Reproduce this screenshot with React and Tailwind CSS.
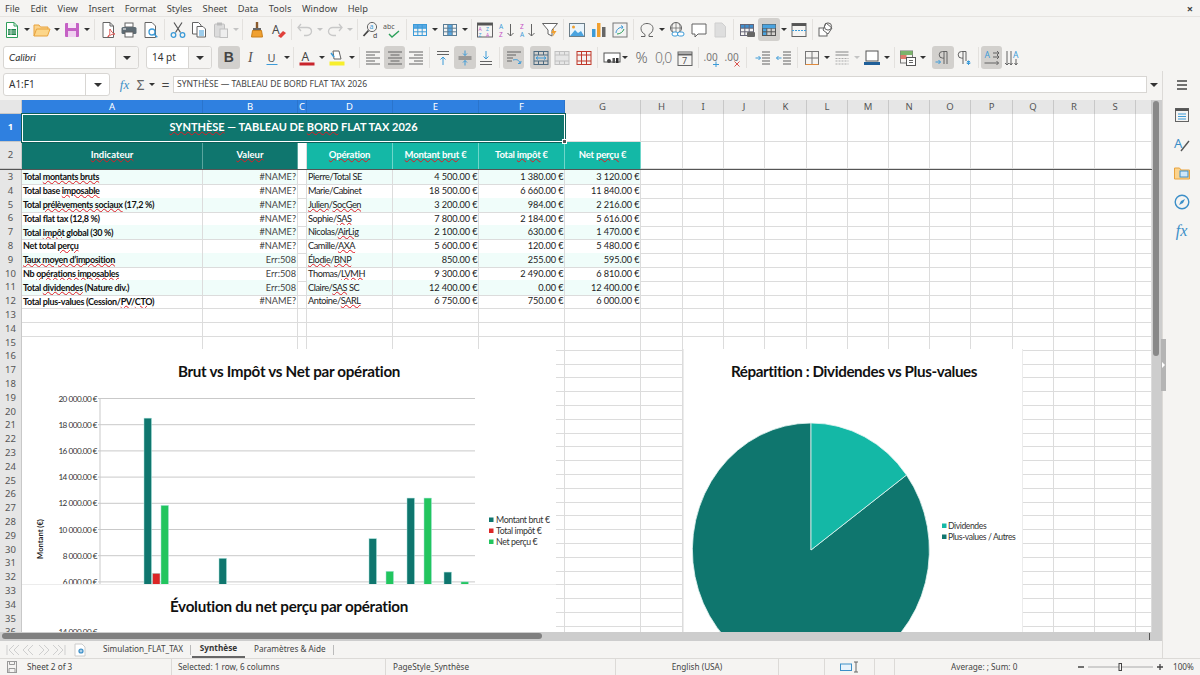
import React from 'react';

const G = '#636363';
const B = '#3c9bd8';
const COLS = 'grid grid-cols-[22px_181px_95px_9px_86px_86px_86px_76px_42px_41px_41px_42px_41px_41px_41px_41px_42px_41px_41px_41px_16px]';
const letters = ['A', 'B', 'C', 'D', 'E', 'F', 'G', 'H', 'I', 'J', 'K', 'L', 'M', 'N', 'O', 'P', 'Q', 'R', 'S', ''];

const rows = [
  ['Total *montants bruts*', '#NAME?', 'Pierre/Total SE', '4 500.00 €', '1 380.00 €', '3 120.00 €'],
  ['Total base *imposable*', '#NAME?', 'Marie/Cabinet', '18 500.00 €', '6 660.00 €', '11 840.00 €'],
  ['Total *prélèvements sociaux* (17,2 %)', '#NAME?', '*Julien*/*SocGen*', '3 200.00 €', '984.00 €', '2 216.00 €'],
  ['Total flat tax (12,8 %)', '#NAME?', 'Sophie/*SAS*', '7 800.00 €', '2 184.00 €', '5 616.00 €'],
  ['Total *impôt* global (30 %)', '#NAME?', 'Nicolas/*AirLig*', '2 100.00 €', '630.00 €', '1 470.00 €'],
  ['Net total *perçu*', '#NAME?', 'Camille/*AXA*', '5 600.00 €', '120.00 €', '5 480.00 €'],
  ['*Taux moyen d’imposition*', 'Err:508', '*Élodie*/*BNP*', '850.00 €', '255.00 €', '595.00 €'],
  ['Nb *opérations imposables*', 'Err:508', 'Thomas/*LVMH*', '9 300.00 €', '2 490.00 €', '6 810.00 €'],
  ['Total *dividendes* (Nature div.)', 'Err:508', 'Claire/*SAS* SC', '12 400.00 €', '0.00 €', '12 400.00 €'],
  ['Total plus-values (Cession/*PV*/*CTO*)', '#NAME?', 'Antoine/*SARL*', '6 750.00 €', '750.00 €', '6 000.00 €'],
];

// text between stars gets the spellcheck squiggle
const Spell = ({ text }) =>
  text.split('*').map((part, i) =>
    i % 2 ? (
      <span key={i} className="underline decoration-wavy decoration-[#e01b24] decoration-1 underline-offset-[0px]">
        {part}
      </span>
    ) : (
      <span key={i}>{part}</span>
    )
  );

const Svg = ({ children, s = 18 }) => (
  <svg width={s} height={s} viewBox="0 0 18 18" fill="none" stroke={G} strokeWidth="1">
    {children}
  </svg>
);

const Btn = ({ children, on }) => (
  <div className={`w-[21.5px] h-[23px] shrink-0 flex items-center justify-center rounded-[3px] ${on ? 'bg-[#d2d0cd]' : ''}`}>
    {children}
  </div>
);

const Dd = ({ off }) => (
  <div className="w-[8.5px] shrink-0 flex justify-center">
    <span className={`border-x-[3px] border-t-[3px] border-x-transparent ${off ? 'border-t-[#c4c4c4]' : 'border-t-[#333]'}`} />
  </div>
);

const Sep = () => (
  <div className="w-[5.7px] shrink-0 flex justify-center">
    <span className="w-px h-[21px] bg-[#e3e1de]" />
  </div>
);

const Lines = ({ d }) => <path d={d} stroke={G} />;

const Grid = ({ color = G, fill }) => (
  <>
    {fill}
    <rect x="2.5" y="3.5" width="13" height="11" stroke={color} />
    <path d="M2.5 7.2h13M2.5 10.8h13M6.8 3.5v11M11.2 3.5v11" stroke={color} />
  </>
);

const Glyph = ({ x, y, size = 7, color = G, children }) => (
  <text x={x} y={y} fontSize={size} fill={color} stroke="none" fontFamily="'Noto Sans',sans-serif">
    {children}
  </text>
);

const Toolbar1 = () => (
  <div className="h-[27px] flex items-center pl-[1.25px] pb-[2px] shrink-0">
    <Btn><Svg><path d="M3.5 1.5h7.5l3.5 3.5v11.5h-11z" fill="#fff" stroke="#2f9e5b" /><path d="M11 1.5V5h3.5" stroke="#2f9e5b" /><rect x="5" y="8" width="8" height="6" fill="#1e8449" stroke="none" /><path d="M5 10h8M5 12h8M8 8v6" stroke="#fff" strokeWidth=".6" /></Svg></Btn>
    <Dd />
    <Btn><Svg><path d="M1 15V4h5l1.5 2H15v2" fill="#fbd38d" stroke="#e8a33d" /><path d="M1 15l2.5-7H17l-2.5 7z" fill="#fcd68a" stroke="#e8a33d" /></Svg></Btn>
    <Dd />
    <Btn><Svg><rect x="2" y="2" width="14" height="14" rx="1" fill="#c561c5" stroke="none" /><rect x="5" y="2" width="8" height="5" fill="#f7e6f7" stroke="none" /><rect x="5" y="10" width="8" height="6" fill="#f0d0f0" stroke="none" /></Svg></Btn>
    <Dd />
    <Sep />
    <Btn><Svg><path d="M4 1.5h7l3.5 3.5v11.5H4z" fill="#fff" /><path d="M11 1.5V5h3.5" /><path d="M9 15c3-1 1-6 2-7 1 2 3 5 5 5-3 0-5 1-7 3z" stroke="#d9534f" fill="#fff" /></Svg></Btn>
    <Btn><Svg><rect x="5" y="2" width="8" height="4" fill="#fff" /><rect x="1.5" y="6" width="15" height="7" rx="1.5" fill="#5e6b73" stroke="none" /><rect x="5" y="11" width="8" height="5" fill="#fff" /><path d="M3 8h3" stroke="#fff" /></Svg></Btn>
    <Btn><Svg><path d="M3 1.5h7l3.5 3.5v11.5H3z" fill="#fff" /><circle cx="10" cy="11" r="3" stroke={B} strokeWidth="1.3" fill="#fff" /><path d="M12.3 13.3l3 3" stroke={B} strokeWidth="1.5" /></Svg></Btn>
    <Sep />
    <Btn><Svg><path d="M5 1.5l6.5 10M13 1.5L6.5 11.5" stroke="#555" strokeWidth="1.2" /><circle cx="4.5" cy="14" r="2.3" stroke={B} strokeWidth="1.3" /><circle cx="13.5" cy="14" r="2.3" stroke={B} strokeWidth="1.3" /></Svg></Btn>
    <Btn><Svg><path d="M2.5 1.5h6l2.5 2.5v9H2.5z" fill="#fff" /><path d="M7 5.5h6l2.5 2.5v8H7z" fill="#fff" /><path d="M9 10h5M9 12h5M9 14h5" stroke={B} /></Svg></Btn>
    <Btn><Svg><rect x="2.5" y="3" width="10" height="13" rx="1" fill="#dcdcdc" stroke="#c0c0c0" /><rect x="5" y="1.5" width="5" height="3" fill="#bbb" stroke="none" /><rect x="8" y="8" width="7.5" height="8.5" fill="#eee" stroke="#c0c0c0" /></Svg></Btn>
    <Dd off />
    <Sep />
    <Btn><Svg><rect x="7.8" y="1" width="2.4" height="6" fill="#8a5a2b" stroke="none" /><rect x="5" y="7" width="8" height="2.5" fill="#666" stroke="none" /><path d="M4.5 9.5h9l1 6.5h-11z" fill="#f0a030" stroke="#c97f1a" /></Svg></Btn>
    <Btn><Svg><Glyph x="3" y="12.5" size="12" color="#4a4a4a">A</Glyph><path d="M9 15l5-5 3 2-5 5z" fill="#e0403a" stroke="none" /></Svg></Btn>
    <Sep />
    <Btn><Svg><path d="M5 3L2 6.5 5 10M2.5 6.5H11c3 0 4.5 2 4.5 4s-2 4-4.5 4H8" stroke="#c8c8c8" strokeWidth="1.3" /></Svg></Btn>
    <Dd off />
    <Btn><Svg><path d="M13 3l3 3.5L13 10M15.5 6.5H7c-3 0-4.5 2-4.5 4s2 4 4.5 4h3" stroke="#c8c8c8" strokeWidth="1.3" /></Svg></Btn>
    <Dd off />
    <Sep />
    <Btn><Svg><circle cx="10" cy="6" r="4.6" stroke="#666" /><Glyph x="7.6" y="8" size="7" color={B}>a</Glyph><path d="M6.5 9.5L1.5 15" stroke="#444" strokeWidth="1.8" /><Glyph x="11" y="16.5" size="7" color="#444">d</Glyph></Svg></Btn>
    <Btn><Svg><Glyph x="0" y="8" size="7" color="#555">abc</Glyph><path d="M6 13l3 3 7-6" stroke="#2ca05a" strokeWidth="1.4" /></Svg></Btn>
    <Sep />
    <Btn><Svg><Grid color={B} fill={<rect x="2.5" y="3.5" width="13" height="3.7" fill="#59a9e4" stroke="none" />} /></Svg></Btn>
    <Dd />
    <Btn><Svg><Grid color="#5a7d96" fill={<rect x="6.8" y="3.5" width="4.4" height="11" fill="#59a9e4" stroke="none" />} /></Svg></Btn>
    <Dd />
    <Sep />
    <Btn><Svg><rect x="1.5" y="2" width="15" height="14" /><rect x="1.5" y="2" width="15" height="2.5" fill="#555" stroke="none" /><Glyph x="2.5" y="10" size="5" color="#c44fc4">A</Glyph><Glyph x="10" y="10" size="5" color={B}>Z</Glyph><Glyph x="2.5" y="15.5" size="5" color={B}>Z</Glyph><Glyph x="10" y="15.5" size="5" color="#c44fc4">A</Glyph></Svg></Btn>
    <Btn><Svg><Glyph x="1" y="7.5" size="6.5" color={B}>A</Glyph><Glyph x="1" y="16" size="6.5" color="#c44fc4">Z</Glyph><path d="M12.5 3v12M9.5 12l3 3 3-3" /></Svg></Btn>
    <Btn><Svg><Glyph x="1" y="7.5" size="6.5" color="#c44fc4">Z</Glyph><Glyph x="1" y="16" size="6.5" color={B}>A</Glyph><path d="M12.5 3v12M9.5 12l3 3 3-3" /></Svg></Btn>
    <Btn><Svg><path d="M1.5 2.5h15l-5.5 6.5v6l-4-2V9z" fill="#fff" /><path d="M13 7l-3 5h2.5l-1 4 4-6h-2.5z" fill="#f0a030" stroke="none" /></Svg></Btn>
    <Sep />
    <Btn><Svg><rect x="1.5" y="2.5" width="15" height="13" stroke="#6b7d88" fill="#eaf4fb" /><circle cx="5.5" cy="6" r="1.5" fill="#f0a030" stroke="none" /><path d="M2 15l5-6 3 3 3-2 3 5z" fill="#4aa3df" stroke="none" /></Svg></Btn>
    <Btn><Svg><rect x="2" y="8" width="3.5" height="8" fill={B} stroke="none" /><rect x="7" y="2" width="3.5" height="14" fill="#f0a030" stroke="none" /><rect x="12" y="6" width="3.5" height="10" fill="#666" stroke="none" /></Svg></Btn>
    <Btn><Svg><rect x="2" y="2" width="14" height="14" fill="#f2f2f2" stroke="#777" /><path d="M5 12c0-3 3-6 7-6M12 6l-2-1.5M12 6l-1.5 2" stroke={B} /><path d="M6 13c3 0 6-2 7-5" stroke="#2ca05a" /></Svg></Btn>
    <Sep />
    <Btn><Svg><path d="M3 15.5h4v-2C4.5 12 3 10 3 7.5 3 4.5 5.5 2.5 9 2.5s6 2 6 5c0 2.500-1.500 4.500-4 6v2h4" /></Svg></Btn>
    <Dd />
    <Btn><Svg><circle cx="8" cy="7" r="5.5" /><path d="M2.500 7h11M8 1.500v11M5 2.500c-1.500 3-1.500 6 0 9M11 2.500c1.500 3 1.500 6 0 9" strokeWidth=".7" /><rect x="4" y="11" width="6" height="4" rx="2" stroke={B} fill="#fff" /><rect x="9.500" y="11" width="6.500" height="4" rx="2" stroke={B} fill="#fff" /></Svg></Btn>
    <Btn><Svg><path d="M2 3h14v10H8l-3 3v-3H2z" fill="#fff" /></Svg></Btn>
    <Btn><Svg><path d="M4 2h7l3.500 3.500V16H4z" fill="#dedede" stroke="#cfcfcf" /></Svg></Btn>
    <Sep />
    <Btn><Svg><Grid color="#667" fill={<rect x="2.500" y="3.500" width="13" height="3.700" fill="#3f8fcf" stroke="none" />} /><rect x="9" y="11" width="8" height="5" rx="1" fill="#666" stroke="none" /></Svg></Btn>
    <Btn on><Svg><Grid color="#555" fill={<rect x="2.500" y="3.500" width="4.300" height="11" fill="#4aa3df" stroke="none" />} /><rect x="2.500" y="3.500" width="13" height="3.700" fill="#4aa3df" stroke="none" /></Svg></Btn>
    <Dd />
    <Btn><Svg><rect x="2" y="2.500" width="14" height="13" /><rect x="2" y="2.500" width="14" height="2.500" fill="#555" stroke="none" /><path d="M2 9.500h14" stroke={B} strokeDasharray="2 1" /></Svg></Btn>
    <Sep />
    <Btn><Svg><rect x="2" y="7" width="8" height="8" fill="#fff" /><path d="M9 2l6 5-4 6-5-4z" fill="#fff" /><circle cx="11" cy="5.500" r="3.600" fill="none" /></Svg></Btn>
  </div>
);

const ComboBox = ({ label, box, text, italic }) => (
  <div className={`h-[23px] shrink-0 flex items-stretch bg-white border border-[#d8d6d3] rounded-[3px] ${box}`}>
    <div className={`flex-1 pl-[5px] flex items-center text-[10px] text-[#333] ${text} ${italic ? 'italic' : ''}`}>{label}</div>
    <div className="w-[23px] shrink-0 border-l border-[#d8d6d3] bg-[#f5f4f2] flex items-center justify-center rounded-r-[3px]">
      <span className="border-x-[4px] border-t-[4px] border-x-transparent border-t-[#333]" />
    </div>
  </div>
);

const AlignIcon = ({ d }) => <Svg><Lines d={d} /></Svg>;

const Toolbar2 = () => (
  <div className="h-[27px] flex items-center pl-[3px] shrink-0">
    <ComboBox box="w-[136px]" text="font-['Lato',sans-serif]" label="Calibri" italic />
    <div className="w-[7px] shrink-0" />
    <ComboBox box="w-[66px]" text="" label="14 pt" />
    <div className="w-[6px] shrink-0" />
    <Btn on><span className="text-[14px] font-bold text-[#444] font-['Liberation_Sans',sans-serif]">B</span></Btn>
    <Btn><span className="text-[14px] italic text-[#555] font-['Liberation_Serif',serif]">I</span></Btn>
    <Btn><Svg><Glyph x="4.500" y="13" size="11" color="#555">U</Glyph><path d="M3.500 15.500h11" stroke={B} /></Svg></Btn>
    <Dd />
    <Sep />
    <Btn><Svg><Glyph x="3.500" y="12" size="12" color="#444">A</Glyph><rect x="1.500" y="13.500" width="15" height="3" fill="#c9252d" stroke="none" /></Svg></Btn>
    <Dd />
    <Btn><Svg><path d="M5 2h6l2 8H6z" fill="#fff" /><path d="M3 4l3 4" stroke={B} strokeWidth="1.500" /><rect x="1.500" y="12.500" width="15" height="4" fill="#f7ee2c" stroke="none" /></Svg></Btn>
    <Dd />
    <Sep />
    <Btn><AlignIcon d="M2 3h14M2 6h9M2 9h14M2 12h9M2 15h14" /></Btn>
    <Btn on><AlignIcon d="M2 3h14M4.500 6h9M2 9h14M4.500 12h9M2 15h14" /></Btn>
    <Btn><AlignIcon d="M2 3h14M7 6h9M2 9h14M7 12h9M2 15h14" /></Btn>
    <Sep />
    <Btn><Svg><path d="M3 2.500h12M3 5.500h12" /><path d="M9 16V8M6.500 10.500L9 8l2.500 2.500" stroke={B} /></Svg></Btn>
    <Btn on><Svg><path d="M2.500 8h13M2.500 10h13" /><path d="M9 1.500V6.500M7 4.500l2 2 2-2M9 16.500V11.500M7 13.500l2-2 2 2" stroke={B} /></Svg></Btn>
    <Btn><Svg><path d="M3 12.500h12M3 15.500h12" /><path d="M9 2v8M6.500 7.500L9 10l2.500-2.500" stroke={B} /></Svg></Btn>
    <Sep />
    <Btn on><Svg><path d="M2 3h14M2 6h9M2 9h6M2 12h5" /><path d="M8 11c4-1 6 0 7 3M13 14.500l2.500 0 .5-2.500" stroke={B} /></Svg></Btn>
    <div className="w-[5.500px] shrink-0" />
    <Btn on><Svg><rect x="2" y="2.500" width="14" height="13" stroke="#4d6a80" /><path d="M2 6h14M2 12h14M6.500 2.500V6M11.500 2.500V6M6.500 12v3.500M11.500 12v3.500" stroke="#4d6a80" /><path d="M4 9h10M6 7.500L4 9l2 1.500M12 7.500L14 9l-2 1.500" stroke={B} /></Svg></Btn>
    <Btn><Svg><rect x="2" y="2.500" width="14" height="13" stroke="#c0c0c0" fill="#e6e6e6" /><path d="M2 6h14M2 12h14M6.500 2.500V6M11.500 2.500V6M6.500 12v3.500M11.500 12v3.500" stroke="#c0c0c0" /></Svg></Btn>
    <Btn><Svg><rect x="2" y="2.500" width="14" height="13" stroke="#c0392b" /><path d="M2 6h14M2 12h14M6.500 2.500v13M11.500 2.500v13" stroke="#c0392b" /></Svg></Btn>
    <Sep />
    <div className="ml-[3px] w-[28px] shrink-0 flex items-center">
      <Svg><rect x="1" y="4" width="16" height="9" stroke="#555" fill="#fff" /><circle cx="6" cy="12" r="2" fill="#444" stroke="none" /><rect x="9.500" y="9" width="2.500" height="5" fill="#555" stroke="none" /><rect x="13" y="9" width="2.500" height="5" fill="#2c2c2c" stroke="none" /></Svg>
      <Dd />
    </div>
    <Btn><span className="text-[15px] font-light text-[#666]">%</span></Btn>
    <Btn><span className="text-[14px] font-light text-[#777] tracking-[-1px]">0,0</span></Btn>
    <Btn><Svg><rect x="2" y="3" width="14" height="13.500" /><path d="M2 5.500h14" strokeWidth="2" /><Glyph x="6" y="14.500" size="9" color="#555">7</Glyph></Svg></Btn>
    <Sep />
    <Btn><Svg><Glyph x="0.500" y="12" size="10" color="#777">.00</Glyph><path d="M10 15.500h6M13 12.500v6" stroke={B} /></Svg></Btn>
    <Btn><Svg><Glyph x="0.500" y="12" size="10" color="#777">.00</Glyph><path d="M10.500 12.500l5 5M15.500 12.500l-5 5" stroke="#d9534f" /></Svg></Btn>
    <Sep />
    <div className="w-[2px] shrink-0" />
    <Btn><Svg><path d="M8 3h8M8 6h8M8 9h8M8 12h8M8 15h8" /><path d="M1.500 9h5M4.500 7l2 2-2 2" stroke={B} /></Svg></Btn>
    <Btn><Svg><path d="M8 3h8M8 6h8M8 9h8M8 12h8M8 15h8" /><path d="M1.500 9h5M3.500 7l-2 2 2 2" stroke={B} /></Svg></Btn>
    <Sep />
    <div className="w-[1px] shrink-0" />
    <Btn><Svg><rect x="2.500" y="2.500" width="13" height="13" stroke="#777" /><path d="M9 2.500v13M2.500 9h13" stroke="#777" /><path d="M2.500 15.500h13" stroke="#e08a3c" /></Svg></Btn>
    <Dd />
    <Btn><Svg><path d="M2.500 3h13M2.500 6h13" stroke="#aaa" strokeWidth="1.300" /><path d="M2.500 9.500h13M2.500 12h13M2.500 15h13" stroke="#aaa" strokeDasharray="2 1" /></Svg></Btn>
    <Dd off />
    <Btn><Svg><rect x="3" y="2" width="12" height="10" stroke="#555" fill="#fff" /><rect x="1" y="13" width="16" height="3" fill="#1f5f99" stroke="none" /></Svg></Btn>
    <Dd />
    <Sep />
    <Btn><Svg><rect x="1.500" y="2" width="12" height="12" stroke="#777" /><rect x="1.500" y="2" width="12" height="4" fill="#7cb46c" stroke="none" /><rect x="1.500" y="6" width="6" height="4" fill="#e07b6c" stroke="none" /><rect x="7.500" y="8.500" width="9" height="8" fill="#fff" stroke="#555" /><path d="M10 11.500h4M10 13.500h4" /></Svg></Btn>
    <Dd />
    <div className="w-[5px] shrink-0" />
    <Btn on><Svg><path d="M10 15V2.500M13 15V2.500M13 2.500H8.500a3.300 3.300 0 0 0 0 6.600H10" /><path d="M1.500 13h5M4.500 11l2 2-2 2" stroke={B} /></Svg></Btn>
    <Btn><Svg><path d="M8 15V2.500M11 12V2.500M11 2.500H6.500a3.300 3.300 0 0 0 0 6.600H8" /><path d="M11.500 14l4-0M13.500 11.500v4.500M12 12l3 3M15 12l-3 3" stroke={B} /></Svg></Btn>
    <Sep />
    <Btn on><Svg><Glyph x="1.500" y="9" size="8.500" color={B}>A</Glyph><path d="M10 4h6M14 2l2 2-2 2M10 8h6M14 6l2 2-2 2M1.500 14h14M13.500 12l2 2-2 2" /></Svg></Btn>
    <Btn><Svg><Glyph x="9" y="9" size="8.500" color={B}>A</Glyph><path d="M3 2v14M1 14l2 2 2-2M7 2v14M5.500 14l1.500 2 1.500-2M12 10v6M10.500 14l1.500 2 1.500-2" /></Svg></Btn>
  </div>
);

const FormulaBar = () => (
  <div className="h-[29px] shrink-0 flex pl-[3px] pt-[2px] items-start text-[#333]">
    <div className="w-[107px] h-[23px] shrink-0 flex bg-white border border-[#d8d6d3] rounded-[3px] items-stretch">
      <div className="flex-1 flex items-center pl-[5px] text-[10px]">A1:F1</div>
      <div className="w-[24px] border-l border-[#d8d6d3] flex items-center justify-center">
        <span className="border-x-[4px] border-t-[4px] border-x-transparent border-t-[#333]" />
      </div>
    </div>
    <div className="ml-[7px] w-[55px] h-[23px] flex items-center shrink-0 gap-[2.500px]">
      <span className="w-[15px] text-center text-[13px] italic text-[#3c8fc8] font-['Liberation_Serif',serif]">fx</span>
      <span className="w-[12px] text-center text-[14px] text-[#666]">Σ</span>
      <span className="border-x-[3px] border-t-[3px] border-x-transparent border-t-[#333]" />
      <span className="ml-[4px] text-[14px] text-[#444]">=</span>
    </div>
    <div className="ml-[1px] mt-[3px] w-[974px] h-[17px] shrink-0 bg-white border border-[#d8d6d3] flex items-center pl-[3px] text-[8.6px] text-[#444]">
      SYNTHÈSE — TABLEAU DE BORD FLAT TAX 2026
    </div>
    <div className="w-[14px] h-[23px] flex items-center justify-center shrink-0">
      <span className="border-x-[4px] border-t-[4px] border-x-transparent border-t-[#333]" />
    </div>
  </div>
);

const Cell = ({ cls = '', children }) => (
  <div className={`border-r border-b border-[#dcdcdc] overflow-hidden whitespace-nowrap flex items-center ${cls}`}>{children}</div>
);

const RowHead = ({ n, on }) => (
  <div className={`flex items-center justify-center text-[9.500px] font-['Noto_Sans',sans-serif] border-r border-b border-[#c8c8c8] ${on ? 'bg-[#2f80e0] text-white font-bold' : 'bg-[#e6e6e6] text-[#555]'}`}>{n}</div>
);

const Empties = ({ from = 0 }) =>
  letters.slice(from).map((l, i) => <Cell key={i} />);

const Sheet = () => (
  <div className="flex-1 relative overflow-hidden bg-white font-['Lato',sans-serif]">
    <div className={`${COLS} h-[14px]`}>
      <div className="bg-[#e6e6e6] border-r border-b border-[#c8c8c8]" />
      {letters.map((l, i) => (
        <div key={i} className={`flex items-center justify-center text-[9.500px] font-['Noto_Sans',sans-serif] border-r ${i < 6 ? 'bg-[#2f80e0] text-white border-[#2a74cc]' : 'bg-[#e6e6e6] text-[#555] border-[#c8c8c8]'}`}>{l}</div>
      ))}
    </div>
    <div className={`${COLS} h-[28px]`}>
      <RowHead n="1" on />
      <div className="col-span-6 relative bg-[#0f766e] border border-white outline outline-[#0d5f58] flex items-center justify-center pb-[2px] text-white font-bold text-[11px]">
        <span><Spell text="*SYNTHÈSE* — TABLEAU DE *BORD* FLAT TAX 2026" /></span>
        <span className="absolute right-[-3px] bottom-[-3px] w-[5px] h-[5px] bg-[#555] border border-white" />
      </div>
      <Empties from={6} />
    </div>
    <div className={`${COLS} h-[28px] border-b border-[#555]`}>
      <RowHead n="2" />
      {['Indicateur', 'Valeur'].map((t) => (
        <div key={t} className="bg-[#0f766e] border-r border-[#5aa59e] flex items-center justify-center text-white font-bold text-[9.500px]">
          <span><Spell text={`*${t}*`} /></span>
        </div>
      ))}
      <div className="border-r border-[#dcdcdc]" />
      {['Opération', 'Montant brut €', 'Total impôt €', 'Net perçu €'].map((t) => (
        <div key={t} className="bg-[#14b8a6] border-r border-[#6fd6ca] flex items-center justify-center text-white font-bold text-[9.500px] tracking-[-0.2px]">
          <span><Spell text={t.replace(/(Opération|Montant brut|impôt|perçu)/, '*$1*')} /></span>
        </div>
      ))}
      <Empties from={7} />
    </div>
    {rows.map((r, i) => {
      const bg = i % 2 ? '' : 'bg-[#f0fdfa]';
      return (
        <div key={i} className={`${COLS} h-[13.800px]`}>
          <RowHead n={i + 3} />
          <Cell cls={`${bg} pl-[1px] font-bold text-[9px] tracking-[-0.33px] text-[#111]`}><span><Spell text={r[0]} /></span></Cell>
          <Cell cls={`${bg} justify-end pr-[1px] text-[9.200px] text-[#444]`}>{r[1]}</Cell>
          <Cell />
          <Cell cls={`${bg} pl-[1px] text-[9.200px] tracking-[-0.42px] text-[#222]`}><span><Spell text={r[2]} /></span></Cell>
          {r.slice(3).map((v, j) => (
            <Cell key={j} cls={`${bg} justify-end pr-[0.500px] text-[9.200px] tracking-[-0.1px] text-[#222]`}>{v}</Cell>
          ))}
          <Empties from={7} />
        </div>
      );
    })}
    {Array.from({ length: 24 }, (_, i) => (
      <div key={i} className={`${COLS} h-[13.800px]`}>
        <RowHead n={i + 13} />
        <Empties />
      </div>
    ))}
    <BarChart />
    <LineChartTop />
    <PieChart />
  </div>
);

const yOf = (v) => 49.5 + ((20000 - v) / 2000) * 26.2;

const money = (v) => `${Math.floor(v / 1000)} ${String(v % 1000).padStart(3, '0')}.00 €`;

const bars = [
  [122, 18500, '#0f766e'], [130.5, 6660, '#dc2626'], [139, 11840, '#22c55e'],
  [197, 7800, '#0f766e'],
  [347, 9300, '#0f766e'], [364, 6810, '#22c55e'],
  [385, 12400, '#0f766e'], [402, 12400, '#22c55e'],
  [422, 6750, '#0f766e'], [439, 6000, '#22c55e'],
];

const BarChart = () => (
  <div className="absolute left-[22px] top-[249px] w-[534px] h-[235px] bg-white overflow-hidden">
    <svg width="534" height="235" className="font-['Lato',sans-serif]">
      <text x="267" y="28" textAnchor="middle" fontSize="15.2" fontWeight="700" letterSpacing="-0.3" fill="#111">Brut vs Impôt vs Net par opération</text>
      {[20000, 18000, 16000, 14000, 12000, 10000, 8000, 6000].map((v) => (
        <g key={v}>
          <line x1="76" x2="453" y1={yOf(v)} y2={yOf(v)} stroke="#c9c9c9" />
          <text x="75" y={yOf(v) + 3} textAnchor="end" fontSize="8.2" letterSpacing="-0.5" fill="#333">{money(v)}</text>
        </g>
      ))}
      <line x1="78" x2="78" y1="49" y2="235" stroke="#c9c9c9" />
      {bars.map(([x, v, c], i) => (
        <rect key={i} x={x} y={yOf(v)} width="7.5" height="235" fill={c} stroke="#a8e3dc" strokeWidth=".5" />
      ))}
      <text transform="translate(21 190) rotate(-90)" textAnchor="middle" fontSize="7.6" fontWeight="700" fill="#222">Montant (€)</text>
      {[['#0f766e', 'Montant brut €', 171], ['#dc2626', 'Total impôt €', 182], ['#22c55e', 'Net perçu €', 193]].map(([c, t, y]) => (
        <g key={t}>
          <rect x="467" y={y - 2.5} width="4.5" height="4.5" fill={c} />
          <text x="474" y={y + 3} fontSize="8.8" letterSpacing="-0.4" fill="#333">{t}</text>
        </g>
      ))}
    </svg>
  </div>
);

const LineChartTop = () => (
  <div className="absolute left-[22px] top-[484px] w-[534px] h-[60px] bg-white border-t border-[#ececec] overflow-hidden">
    <svg width="534" height="60" className="font-['Lato',sans-serif]">
      <text x="267" y="27" textAnchor="middle" fontSize="15.2" fontWeight="700" letterSpacing="-0.25" fill="#111">Évolution du net perçu par opération</text>
      <text x="75" y="50" textAnchor="end" fontSize="8.2" letterSpacing="-0.5" fill="#333">14 000.00 €</text>
    </svg>
  </div>
);

const PieChart = () => (
  <div className="absolute left-[683px] top-[249px] w-[340px] h-[290px] bg-white border-x border-[#ececec] overflow-hidden">
    <svg width="340" height="290" className="font-['Lato',sans-serif]">
      <text x="170" y="28" textAnchor="middle" fontSize="15.2" fontWeight="700" letterSpacing="-0.38" fill="#111">Répartition : Dividendes vs Plus-values</text>
      <path d="M127 201L222.5 126A118.5 127 0 1 1 127 74Z" fill="#0f766e" stroke="#e6f5f2" strokeWidth=".8" />
      <path d="M127 201L127 74A118.5 127 0 0 1 222.5 126Z" fill="#14b8a6" stroke="#e6f5f2" strokeWidth=".8" />
      <rect x="258" y="174.5" width="4.5" height="4.5" fill="#14b8a6" />
      <text x="264" y="179.5" fontSize="8.6" letterSpacing="-0.4" fill="#333">Dividendes</text>
      <rect x="258" y="185.5" width="4.5" height="4.5" fill="#0f766e" />
      <text x="264" y="190.5" fontSize="8.6" letterSpacing="-0.4" fill="#333">Plus-values / Autres</text>
    </svg>
  </div>
);

const VScroll = () => (
  <div className="w-[10px] shrink-0 bg-[#cdcdcd] pl-[1px] pt-[1px]">
    <div className="w-[6px] h-[255px] rounded-[3px] bg-[#888]" />
  </div>
);

const HScroll = () => (
  <div className="h-[9px] shrink-0 bg-[#cdcdcd] pl-[2px] pt-[1px] relative">
    <div className="w-[540px] h-[6px] rounded-[3px] bg-[#808080]" />
    <span className="absolute left-[1149px] top-[1px] w-px h-[7px] bg-[#555]" />
  </div>
);

const Tabs = () => (
  <div className="h-[17px] shrink-0 flex items-center text-[8.200px] text-[#444]">
    <div className="w-[74px] pl-[6px] flex items-center shrink-0">
      <svg width="60" height="12" viewBox="0 0 60 12" fill="none" stroke="#cfcfcf">
        <path d="M1 1v10M8 1L3 6l5 5M13 1L8 6l5 5M22 1l-5 5 5 5M27 1l-5 5 5 5M33 1l5 5-5 5M38 1l5 5-5 5M47 1l5 5-5 5M52 1l5 5-5 5M59 1v10" />
      </svg>
    </div>
    <div className="w-[29px] shrink-0">
      <svg width="12" height="14" viewBox="0 0 12 14" fill="none">
        <path d="M1 1h7l3 3v9H1z" fill="#fff" stroke="#ccc" />
        <circle cx="7" cy="8" r="2.600" fill="#3c8fc8" />
        <path d="M5.600 8h2.800M7 6.600v2.800" stroke="#fff" strokeWidth=".7" />
      </svg>
    </div>
    <span className="w-[87px] shrink-0">Simulation_FLAT_TAX</span>
    <span className="w-px h-[10px] bg-[#bbb] shrink-0" />
    <div className="ml-[1px] w-[53px] h-full shrink-0 flex items-center justify-center font-bold border-b-2 border-[#666] text-[#333]">Synthèse</div>
    <span className="ml-[9px] w-[79px] shrink-0">Paramètres & Aide</span>
    <span className="w-px h-[10px] bg-[#bbb] shrink-0" />
  </div>
);

const Status = () => (
  <div className="h-[17px] shrink-0 flex items-center border-t border-[#dcdad7] text-[8.200px] text-[#444] bg-[#f5f4f2]">
    <div className="w-[172px] shrink-0 flex items-center pl-[7px] gap-[10px] border-r border-[#dcdad7] h-full">
      <svg width="10" height="12" viewBox="0 0 10 12" fill="none" stroke="#999">
        <rect x=".5" y=".5" width="9" height="11" />
        <path d="M2.500 .5v3h5v-3M2 11.500v-4h6v4" />
      </svg>
      Sheet 2 of 3
    </div>
    <div className="w-[214px] shrink-0 pl-[6px] border-r border-[#dcdad7] h-full flex items-center">Selected: 1 row, 6 columns</div>
    <div className="w-[230px] shrink-0 pl-[7px] border-r border-[#dcdad7] h-full flex items-center">PageStyle_Synthèse</div>
    <div className="w-[163px] shrink-0 border-r border-[#dcdad7] h-full flex items-center justify-center">English (USA)</div>
    <div className="w-[46px] shrink-0 border-r border-[#dcdad7] h-full" />
    <div className="w-[50px] shrink-0 border-r border-[#dcdad7] h-full flex items-center justify-center">
      <svg width="20" height="12" viewBox="0 0 20 12" fill="none">
        <rect x=".5" y="3" width="11" height="6.500" stroke="#3c8fc8" fill="#e8f3fb" />
        <path d="M16 1v10M14 1h4M14 11h4" stroke="#666" />
      </svg>
    </div>
    <div className="w-[20px] shrink-0 border-r border-[#dcdad7] h-full" />
    <div className="w-[177px] shrink-0 h-full flex items-center pl-[56px]">Average: ; Sum: 0</div>
    <div className="w-[95px] shrink-0 flex items-center">
      <svg width="85" height="12" viewBox="0 0 85 12" fill="none" stroke="#444" className="ml-[6px]">
        <path d="M0 6h6M79 6h6M82 3v6" strokeWidth="1.300" />
        <path d="M10 6h65" stroke="#aaa" />
        <rect x="41" y="2.500" width="2.500" height="7" fill="#f5f4f2" />
      </svg>
    </div>
    <span className="ml-[6px]">100%</span>
  </div>
);

const Sidebar = () => (
  <div className="w-[38px] shrink-0 border-l border-[#dcdad7] relative flex flex-col items-center pt-[4px]">
    <div className="h-[20px] flex items-center mb-[5.500px]">
      <svg width="14" height="12" viewBox="0 0 14 12" stroke="#444" strokeWidth="1.300"><path d="M2 2h10M2 6h10M2 10h10" /></svg>
    </div>
    <div className="h-[29px] flex items-center">
      <Svg><rect x="2.500" y="2.500" width="13" height="13" /><rect x="2.500" y="2.500" width="13" height="2.500" fill="#555" stroke="none" /><path d="M5 8h8M5 10.500h8M5 13h8" stroke={B} /></Svg>
    </div>
    <div className="h-[29px] flex items-center">
      <Svg><Glyph x="1" y="13" size="13" color="#3c8fc8">A</Glyph><path d="M8 16l8-10" stroke="#555" strokeWidth="1.400" /></Svg>
    </div>
    <div className="h-[29px] flex items-center">
      <Svg><path d="M1.500 15V4h5l1.500 2h8.500v9z" fill="#fbd38d" stroke="#e8a33d" /><rect x="7" y="7" width="8" height="6" fill="#cfe7f7" stroke="#3c8fc8" /></Svg>
    </div>
    <div className="h-[29px] flex items-center">
      <Svg><circle cx="9" cy="9" r="6.800" stroke="#3c8fc8" strokeWidth="1.400" /><path d="M12 6L8 8l-2 4 4-2z" fill="#3c8fc8" stroke="none" /></Svg>
    </div>
    <div className="h-[29px] flex items-center">
      <span className="text-[16px] italic text-[#3c8fc8] font-['Liberation_Serif',serif]">fx</span>
    </div>
    <div className="absolute left-[-2px] top-[268px] w-[5px] h-[52px] bg-[#b4b4b4] flex items-center justify-center">
      <span className="border-y-[3px] border-l-[3px] border-y-transparent border-l-white" />
    </div>
  </div>
);

const App = () => (
  <div className="w-[1200px] h-[675px] overflow-hidden flex flex-col bg-[#f5f4f2] font-['Noto_Sans',sans-serif]">
    <div className="h-[17px] shrink-0 flex items-center pt-[1px] border-b border-[#e6e4e1] text-[9.300px] text-[#444] relative">
      <div className="flex gap-[10.500px] pl-[5px]">
        {['File', 'Edit', 'View', 'Insert', 'Format', 'Styles', 'Sheet', 'Data', 'Tools', 'Window', 'Help'].map((m) => (
          <span key={m}>{m}</span>
        ))}
      </div>
      <span className="absolute right-[7px] top-[1px] text-[11px] font-bold text-[#444]">×</span>
    </div>
    <Toolbar1 />
    <Toolbar2 />
    <div className="flex-1 flex min-h-0">
      <div className="w-[1162px] shrink-0 flex flex-col">
        <FormulaBar />
        <div className="h-[532px] shrink-0 flex">
          <Sheet />
          <VScroll />
        </div>
        <HScroll />
        <Tabs />
      </div>
      <Sidebar />
    </div>
    <Status />
  </div>
);

export default App;
